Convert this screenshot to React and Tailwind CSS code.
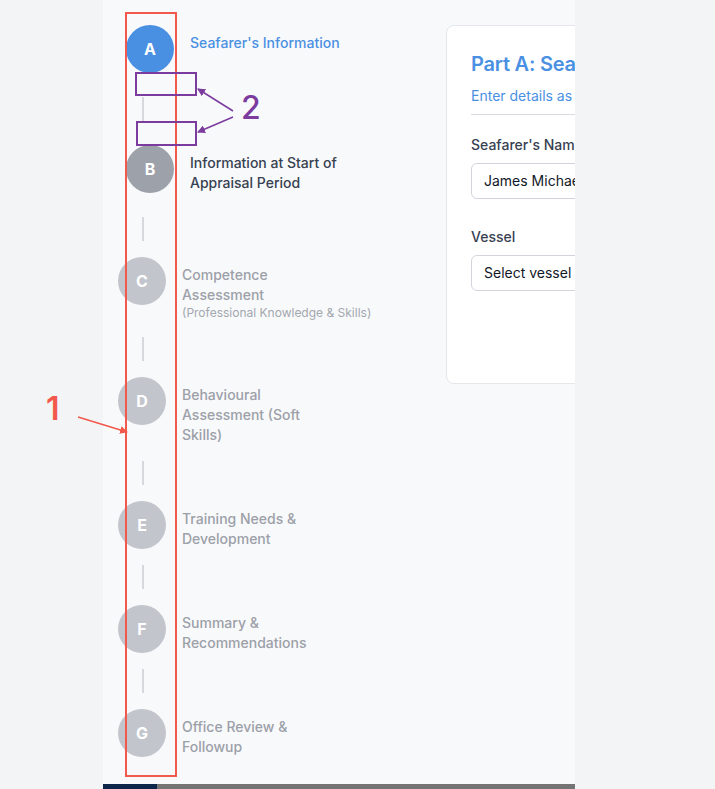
import React from "react";

const steps = [
  { key: "A", title: "Seafarer's Information", state: "active" },
  { key: "B", title: "Information at Start of Appraisal Period", state: "done" },
  { key: "C", title: "Competence Assessment", sub: "(Professional Knowledge & Skills)", state: "todo" },
  { key: "D", title: "Behavioural Assessment (Soft Skills)", state: "todo" },
  { key: "E", title: "Training Needs & Development", state: "todo" },
  { key: "F", title: "Summary & Recommendations", state: "todo" },
  { key: "G", title: "Office Review & Followup", state: "todo" },
];

function Step({ step }) {
  const lifted = step.state !== "todo";
  const circle =
    step.state === "active"
      ? "bg-[#4a90e2]"
      : step.state === "done"
      ? "bg-[#9ca1aa]"
      : "bg-[#c2c6cc]";
  const label =
    step.state === "active"
      ? "text-[#4a90e2]"
      : step.state === "done"
      ? "text-[#374151]"
      : "text-[#9ca0a8]";

  return (
    <div className={`flex items-start gap-4 ${lifted ? "py-2 pl-2" : ""}`}>
      <div
        className={`w-12 h-12 shrink-0 rounded-full flex items-center justify-center text-white text-base font-bold ${circle}`}
      >
        {step.key}
      </div>
      <div className="mt-2">
        <div className={`text-sm leading-5 font-medium max-w-[150px] ${label}`}>
          {step.title}
        </div>
        {step.sub && (
          <div className="text-xs leading-4 text-[#a3a7ae] whitespace-nowrap">
            {step.sub}
          </div>
        )}
      </div>
    </div>
  );
}

function Connector() {
  return <div className="ml-6 my-4 w-0.5 h-6 bg-[#d5d8dd]" />;
}

export default function App() {
  return (
    <div
      className="relative h-[789px] w-[715px] overflow-hidden bg-[#f3f4f6] flex"
      style={{ fontFamily: "Inter, 'Noto Sans', sans-serif" }}
    >
      <div className="w-[103px] shrink-0" />

      <div className="w-[472px] shrink-0 flex flex-col">
        <div className="flex-1 flex overflow-hidden bg-[#f8f9fb]">
          {/* stepper */}
          <div className="w-[319px] shrink-0 pt-[17px] pl-[15px]">
            {steps.map((s, i) => (
              <div key={s.key}>
                <Step step={s} />
                {i < steps.length - 1 && <Connector />}
              </div>
            ))}
          </div>

          {/* form */}
          <div className="pl-6 pt-[25px]">
            <div className="w-[640px] h-[359px] bg-white border border-[#e5e7eb] rounded-lg p-6">
              <h2 className="text-xl leading-7 font-semibold text-[#4a90e2] tracking-[-0.2px]">
                Part A: Seafarer's Information
              </h2>
              <p className="mt-2 pb-2 text-sm leading-5 text-[#4a90e2] border-b border-[#d9dbe1]">
                Enter details as applicable for this appraisal
              </p>
              <label className="block mt-5 text-sm leading-5 font-medium text-[#374151]">
                Seafarer's Name
              </label>
              <div className="mt-2 w-[280px] h-9 border border-[#d1d5db] rounded-md px-3 flex items-center text-sm text-[#111827]">
                James Michael Anderson
              </div>
              <label className="block mt-7 text-sm leading-5 font-medium text-[#374151]">
                Vessel
              </label>
              <div className="mt-2 w-[280px] h-9 border border-[#d1d5db] rounded-md px-3 flex items-center text-sm text-[#111827]">
                Select vessel
              </div>
            </div>
          </div>
        </div>
        <div className="h-[5px] flex">
          <div className="w-[54px] bg-[#0d2548]" />
          <div className="flex-1 bg-[#747474]" />
        </div>
      </div>

      {/* annotations */}
      <div className="absolute left-[125px] top-[12px] w-[52px] h-[765px] border-2 border-[#f2584c]" />
      <div className="absolute left-[135px] top-[72px] w-[62px] h-[24px] border-2 border-[#7b3c9e]" />
      <div className="absolute left-[136px] top-[121px] w-[61px] h-[25px] border-2 border-[#7b3c9e]" />
      <div className="absolute left-[46px] top-[389px] text-[32px] leading-10 font-semibold text-[#f2584c]">
        1
      </div>
      <div className="absolute left-[241px] top-[88px] text-[32px] leading-10 font-medium text-[#7b3c9e]">
        2
      </div>
      <svg className="absolute inset-0 pointer-events-none" width="715" height="789">
        <defs>
          <marker id="ar" markerWidth="8" markerHeight="8" refX="7" refY="4" orient="auto" markerUnits="userSpaceOnUse">
            <path d="M0,0 L8,4 L0,8 Z" fill="#f2584c" />
          </marker>
          <marker id="ap" markerWidth="8" markerHeight="8" refX="7" refY="4" orient="auto" markerUnits="userSpaceOnUse">
            <path d="M0,0 L8,4 L0,8 Z" fill="#7b3c9e" />
          </marker>
        </defs>
        <line x1="78" y1="417" x2="127" y2="432" stroke="#f2584c" strokeWidth="1.5" markerEnd="url(#ar)" />
        <line x1="233" y1="111" x2="198" y2="89" stroke="#7b3c9e" strokeWidth="1.5" markerEnd="url(#ap)" />
        <line x1="233" y1="117" x2="198" y2="132" stroke="#7b3c9e" strokeWidth="1.5" markerEnd="url(#ap)" />
      </svg>
    </div>
  );
}
